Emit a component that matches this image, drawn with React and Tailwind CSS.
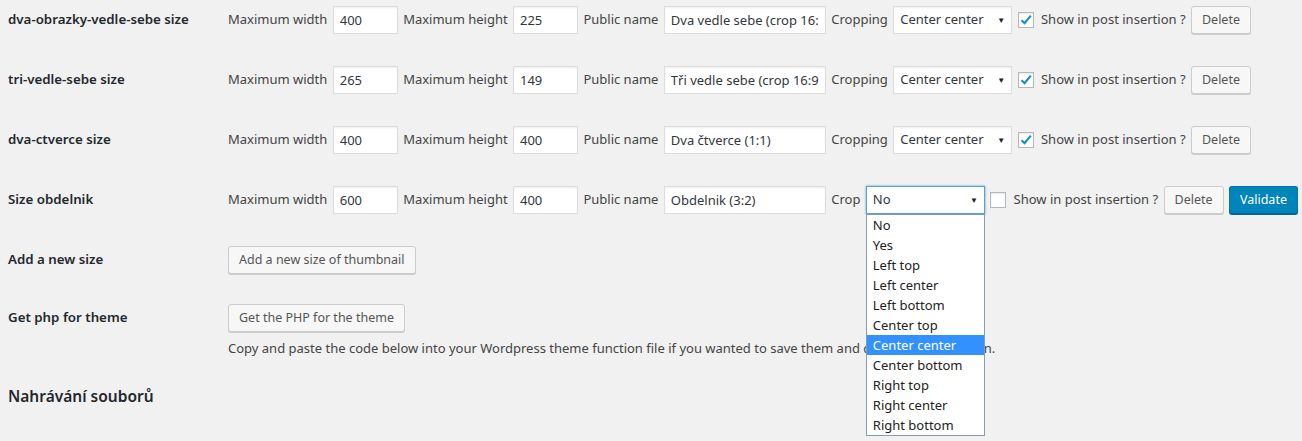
import React from "react";

const FONT = "font-['Segoe_UI','Noto_Sans',sans-serif]";

const rows = [
  { label: "dva-obrazky-vedle-sebe size", w: "400", h: "225", name: "Dva vedle sebe (crop 16:9)", crop: "Cropping", val: "Center center", checked: true },
  { label: "tri-vedle-sebe size", w: "265", h: "149", name: "Tři vedle sebe (crop 16:9)", crop: "Cropping", val: "Center center", checked: true },
  { label: "dva-ctverce size", w: "400", h: "400", name: "Dva čtverce (1:1)", crop: "Cropping", val: "Center center", checked: true },
];

const options = ["No", "Yes", "Left top", "Left center", "Left bottom", "Center top", "Center center", "Center bottom", "Right top", "Right center", "Right bottom"];

function Input({ value, w }) {
  return (
    <input
      readOnly
      value={value}
      className={`${w} shrink-0 h-[28px] bg-white border border-[#ddd] shadow-[inset_0_1px_2px_rgba(0,0,0,0.07)] px-[6px] text-[13px] text-[#32373c] outline-none`}
    />
  );
}

function Select({ value, focus }) {
  return (
    <div
      className={`w-[119px] shrink-0 h-[28px] bg-white border flex items-center justify-between pl-[6px] pr-[6px] text-[13px] text-[#32373c] ${
        focus ? "border-[#5b9dd9] shadow-[0_0_2px_rgba(30,140,190,0.8)]" : "border-[#ddd] shadow-[inset_0_1px_2px_rgba(0,0,0,0.07)]"
      }`}
    >
      <span>{value}</span>
      <span className="text-[8px] text-[#222] leading-none">▼</span>
    </div>
  );
}

function Checkbox({ checked }) {
  return (
    <div className="w-[16px] h-[16px] bg-white border border-[#b4b9be] shadow-[inset_0_1px_2px_rgba(0,0,0,0.1)] flex items-center justify-center shrink-0">
      {checked && (
        <svg width="14" height="14" viewBox="0 0 14 14">
          <path d="M2.5 7.2 L5.6 10.2 L11.8 2.6" fill="none" stroke="#1e8cbe" strokeWidth="2.2" />
        </svg>
      )}
    </div>
  );
}

function Button({ children, primary, cls = "" }) {
  return primary ? (
    <div className={`h-[28px] px-[10px] shrink-0 whitespace-nowrap flex items-center rounded-[3px] bg-[#0085ba] border border-[#0073aa] border-b-[#006799] shadow-[0_1px_0_#006799] text-white text-[12.5px] ${cls}`}>
      {children}
    </div>
  ) : (
    <div className={`h-[28px] px-[10px] shrink-0 whitespace-nowrap flex items-center rounded-[3px] bg-[#f7f7f7] border border-[#ccc] shadow-[0_1px_0_#ccc] text-[#555] text-[12.5px] ${cls}`}>
      {children}
    </div>
  );
}

function Label({ children }) {
  return <div className="w-[228px] shrink-0 pl-[8px] h-[28px] flex items-center text-[13.3px] font-semibold text-[#23282d] whitespace-nowrap">{children}</div>;
}

function SizeRow({ r }) {
  return (
    <div className="h-[60px] pt-[6px] flex items-start">
      <Label>{r.label}</Label>
      <div className="flex items-center gap-[5.4px] text-[13px] text-[#444] whitespace-nowrap">
        <span>Maximum width</span>
        <Input value={r.w} w="w-[65px]" />
        <span>Maximum height</span>
        <Input value={r.h} w="w-[65px]" />
        <span>Public name</span>
        <Input value={r.name} w="w-[162px]" />
        <span>{r.crop}</span>
        <Select value={r.val} />
        <Checkbox checked={r.checked} />
        <span className="ml-[2px]">Show in post insertion ?</span>
        <Button>Delete</Button>
      </div>
    </div>
  );
}

export default function App() {
  return (
    <div className={`${FONT} w-full h-[441px] bg-[#f1f1f1] overflow-hidden text-[#444]`}>
      {rows.map((r) => (
        <SizeRow key={r.label} r={r} />
      ))}
      <div className="h-[60px] pt-[6px] flex items-start">
        <Label>Size obdelnik</Label>
        <div className="flex items-center gap-[5.4px] text-[13px] text-[#444] whitespace-nowrap">
          <span>Maximum width</span>
          <Input value="600" w="w-[65px]" />
          <span>Maximum height</span>
          <Input value="400" w="w-[65px]" />
          <span>Public name</span>
          <Input value="Obdelnik (3:2)" w="w-[162px]" />
          <span>Crop</span>
          <div className="relative shrink-0">
            <Select value="No" focus />
            <div className="absolute left-0 top-[28px] w-[119px] bg-white border border-[#7f9db9] z-10">
              {options.map((o) => (
                <div
                  key={o}
                  className={`h-[20px] leading-[20px] pl-[6px] text-[13px] ${o === "Center center" ? "bg-[#3390ff] text-white" : "text-[#222]"}`}
                >
                  {o}
                </div>
              ))}
            </div>
          </div>
          <Checkbox />
          <span className="ml-[2px]">Show in post insertion ?</span>
          <Button>Delete</Button>
          <Button primary>Validate</Button>
        </div>
      </div>
      <div className="h-[58px] pt-[6px] flex items-start">
        <Label>Add a new size</Label>
        <Button>Add a new size of thumbnail</Button>
      </div>
      <div className="pt-[6px] flex items-start">
        <Label>Get php for theme</Label>
        <div className="flex flex-col items-start">
          <Button>Get the PHP for the theme</Button>
          <div className="mt-[6px] text-[13px] leading-[20px] text-[#444] whitespace-nowrap">
            Copy and paste the code below into your Wordpress theme function file if you wanted to save them and deactivate the plugin.
          </div>
        </div>
      </div>
      <h2 className="pl-[8px] mt-[27px] text-[15.5px] font-semibold text-[#23282d]">Nahrávání souborů</h2>
    </div>
  );
}
